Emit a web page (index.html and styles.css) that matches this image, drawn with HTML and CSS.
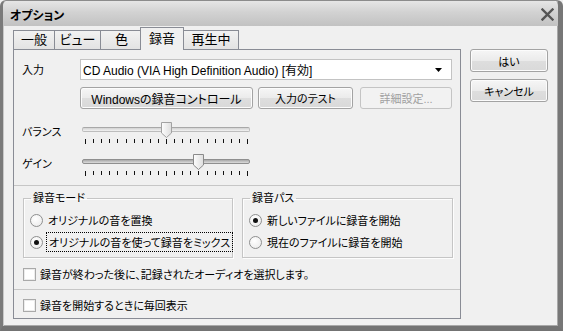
FILE: index.html
```html
<!DOCTYPE html>
<html lang="ja">
<head>
  <meta charset="UTF-8" />
  <meta name="viewport" content="width=device-width, initial-scale=1.0" />
  <title>オプション</title>
  <link rel="stylesheet" href="styles.css">
</head>
<body>
  <div class="window">
    <div class="titlebar">
      <span class="title">オプション</span>
      <svg class="close" width="13" height="13" viewBox="0 0 13 13">
        <path d="M1.5 1.5 L11.5 11.5 M11.5 1.5 L1.5 11.5" stroke="#555" stroke-width="2.4" stroke-linecap="square" />
      </svg>
    </div>

    <div class="client">
      <div class="main">
        <div class="tabs">
          <div class="tab tab-general">一般</div>
          <div class="tab tab-view">ビュー</div>
          <div class="tab tab-color">色</div>
          <div class="tab tab-rec active">録音</div>
          <div class="tab tab-play">再生中</div>
        </div>

        <div class="panel">
          <div class="row-input">
            <label class="field-label">入力</label>
            <div class="combo">
              <span class="combo-text">CD Audio (VIA High Definition Audio) [有効]</span>
              <svg class="combo-arrow" width="7" height="4" viewBox="0 0 7 4"><path d="M0 0h7L3.5 4z" fill="#000" /></svg>
            </div>
          </div>

          <div class="row-buttons">
            <button class="btn btn-wincontrol">Windowsの録音コントロール</button>
            <button class="btn btn-test">入力のテスト</button>
            <button class="btn btn-detail" disabled>詳細設定...</button>
          </div>

          <div class="slider-row">
            <label class="field-label slider-label">バランス</label>
            <div class="slider">
              <div class="track"></div>
              <svg class="thumb" style="left: 50%" width="11" height="16" viewBox="0 0 11 16">
                <defs>
                  <linearGradient id="tg1" x1="0" y1="0" x2="1" y2="0">
                    <stop offset="0" stop-color="#fdfdfd" /><stop offset="1" stop-color="#dedede" />
                  </linearGradient>
                </defs>
                <path d="M0.5 0.5h10v10.5l-5 4.5l-5-4.5z" fill="url(#tg1)" stroke="#a2a2a2" />
              </svg>
              <svg class="ticks" width="164" height="5" viewBox="0 0 164 5" shape-rendering="crispEdges">
                <path d="M0.5 0v5M8.5 0v4M16.5 0v4M24.5 0v4M32.5 0v4M41.5 0v4M49.5 0v4M57.5 0v4M65.5 0v4M73.5 0v4M81.5 0v5M89.5 0v4M97.5 0v4M105.5 0v4M113.5 0v4M122.5 0v4M130.5 0v4M138.5 0v4M146.5 0v4M154.5 0v4M162.5 0v5" stroke="#111" />
              </svg>
            </div>
          </div>

          <div class="slider-row">
            <label class="field-label slider-label">ゲイン</label>
            <div class="slider">
              <div class="track track-focus"></div>
              <svg class="thumb" style="left: 69%" width="11" height="16" viewBox="0 0 11 16">
                <defs>
                  <linearGradient id="tg2" x1="0" y1="0" x2="1" y2="0">
                    <stop offset="0" stop-color="#fdfdfd" /><stop offset="1" stop-color="#dedede" />
                  </linearGradient>
                </defs>
                <path d="M0.5 0.5h10v10.5l-5 4.5l-5-4.5z" fill="url(#tg2)" stroke="#8a8a8a" />
              </svg>
              <svg class="ticks" width="164" height="5" viewBox="0 0 164 5" shape-rendering="crispEdges">
                <path d="M0.5 0v5M8.5 0v4M16.5 0v4M24.5 0v4M32.5 0v4M41.5 0v4M49.5 0v4M57.5 0v4M65.5 0v4M73.5 0v4M81.5 0v5M89.5 0v4M97.5 0v4M105.5 0v4M113.5 0v4M122.5 0v4M130.5 0v4M138.5 0v4M146.5 0v4M154.5 0v4M162.5 0v5" stroke="#111" />
              </svg>
            </div>
          </div>

          <div class="separator sep-top"></div>

          <div class="groups">
            <fieldset class="group group-mode">
              <legend>録音モード</legend>
              <div class="radio-row">
                <span class="radio"></span>
                <span>オリジナルの音を置換</span>
              </div>
              <div class="radio-row">
                <span class="radio checked"></span>
                <span class="focus">オリジナルの音を使って録音をミックス</span>
              </div>
            </fieldset>
            <fieldset class="group group-path">
              <legend>録音パス</legend>
              <div class="radio-row">
                <span class="radio checked"></span>
                <span>新しいファイルに録音を開始</span>
              </div>
              <div class="radio-row">
                <span class="radio"></span>
                <span>現在のファイルに録音を開始</span>
              </div>
            </fieldset>
          </div>

          <div class="check-row check-select">
            <span class="checkbox"></span>
            <span>録音が終わった後に、記録されたオーディオを選択します。</span>
          </div>

          <div class="separator sep-bottom"></div>

          <div class="check-row check-show">
            <span class="checkbox"></span>
            <span>録音を開始するときに毎回表示</span>
          </div>
        </div>
      </div>

      <div class="side">
        <button class="btn btn-side">はい</button>
        <button class="btn btn-side">キャンセル</button>
      </div>
    </div>
  </div>
</body>
</html>
```

FILE: styles.css
```css
* {
  box-sizing: border-box;
}
body {
  margin: 0;
  padding: 0;
  font-family: 'Liberation Sans', 'Noto Sans CJK JP', sans-serif;
  font-size: 11px;
  font-feature-settings: "palt";
  color: #000;
  background: #f0f0f0;
  overflow: hidden;
  white-space: nowrap;
}
.window {
  width: 563px;
  height: 331px;
  border-top: 1px solid #8c8c8c;
  border-left: 3px solid #7a7a7a;
  border-right: 5px solid #777;
  border-bottom: 5px solid #737373;
  border-radius: 6px 6px 0 0;
  box-shadow: inset 1px 0 0 #c8c8c8, inset -1px 0 0 #a8a8a8, inset 0 -1px 0 #a8a8a8;
  background: #f0f0f0;
  display: flex;
  flex-direction: column;
}
.titlebar {
  height: 25px;
  flex: none;
  display: flex;
  align-items: center;
  justify-content: space-between;
  padding: 1px 4px 0 7px;
  background: linear-gradient(#e6e6e6, #d2d2d2 45%, #c2c2c2);
  border-radius: 5px 5px 0 0;
}
.title {
  font-weight: bold;
  font-size: 12px;
}
.close {
  display: block;
  margin-top: 1px;
}
.client {
  flex: 1;
  display: flex;
  gap: 9px;
  padding: 1px 10px 7px 10px;
}
.main {
  width: 448px;
  display: flex;
  flex-direction: column;
}
.tabs {
  height: 22px;
  display: flex;
  align-items: flex-end;
}
.tab {
  height: 19px;
  font-size: 13px;
  line-height: 18px;
  text-align: center;
  border: 1px solid #898c95;
  border-bottom: none;
  background: linear-gradient(#f2f2f2, #e3e3e3);
  margin-right: -1px;
}
.tab-general { width: 42px; }
.tab-view { width: 47px; }
.tab-color { width: 43px; }
.tab-play { width: 56px; }
.tab.active {
  height: 23px;
  margin: 0 -1px -1px -2px;
  width: 44px;
  line-height: 21px;
  background: #f0f0f0;
  position: relative;
  z-index: 1;
}
.panel {
  height: 270px;
  border: 1px solid #898c95;
  background: #f0f0f0;
}
.field-label {
  width: 58px;
  flex: none;
  line-height: 14px;
}
.row-input {
  display: flex;
  align-items: center;
  margin-top: 9px;
  padding-left: 8px;
}
.combo {
  width: 372px;
  height: 21px;
  background: #fff;
  border: 1px solid #c3c3c3;
  display: flex;
  align-items: center;
  justify-content: space-between;
  padding: 0 9px 0 2px;
}
.combo-text {
  font-size: 12px;
}
.combo-arrow {
  display: block;
}
.row-buttons {
  display: flex;
  margin-top: 7px;
  padding-left: 66px;
}
.btn {
  font-family: inherit;
  font-size: 11px;
  font-feature-settings: "palt";
  height: 22px;
  padding: 0;
  color: #000;
  border: 1px solid #a3a3a3;
  border-radius: 3px;
  background: linear-gradient(#f6f6f6, #ebebeb 50%, #dedede 51%, #d9d9d9);
  box-shadow: inset 0 0 0 1px #fcfcfc;
}
.btn-wincontrol {
  width: 173px;
  font-size: 12px;
}
.btn-test { width: 95px; margin-left: 5px; }
.btn-detail {
  width: 92px;
  margin-left: 7px;
  color: #a0a0a0;
  border-color: #c4c4c4;
  background: #f2f2f2;
  box-shadow: none;
}
.slider-row {
  display: flex;
  height: 32px;
  padding-left: 8px;
}
.row-buttons + .slider-row {
  margin-top: 9px;
}
.slider-label {
  padding-top: 7px;
}
.slider {
  position: relative;
  width: 168px;
  margin-left: 2px;
}
.track {
  position: absolute;
  left: 0;
  top: 9px;
  width: 168px;
  height: 5px;
  border: 1px solid #bdbdbd;
  border-top-color: #a8a8a8;
  border-radius: 2px;
  background: linear-gradient(#d2d2d2, #f2f2f2);
}
.track-focus {
  border-color: #8f8f8f;
  background: linear-gradient(#a8a8a8, #dcdcdc);
}
.thumb {
  position: absolute;
  top: 4px;
  margin-left: -5px;
}
.ticks {
  position: absolute;
  left: 3px;
  top: 21px;
}
.separator {
  height: 1px;
  background: #c6c6c6;
}
.sep-top {
  margin-top: 3px;
}
.groups {
  display: flex;
  gap: 9px;
  margin-top: 5px;
  padding-left: 9px;
}
.group {
  margin: 0;
  min-width: 0;
  padding: 4px 0 4px 6px;
  border: 1px solid #c5c5c5;
  box-shadow: inset 1px 1px 0 #fdfdfd, 1px 1px 0 #fdfdfd;
}
.group-mode { width: 210px; }
.group-path { width: 211px; }
.group legend {
  line-height: 14px;
  padding: 0 2px;
  margin-left: 1px;
}
.radio-row {
  display: flex;
  align-items: center;
  gap: 5px;
  height: 22px;
}
.radio {
  width: 13px;
  height: 13px;
  flex: none;
  border-radius: 50%;
  border: 1px solid #8e8f8f;
  background: radial-gradient(circle at 40% 35%, #fff, #e8e8e8);
  position: relative;
}
.radio.checked::after {
  content: "";
  position: absolute;
  left: 3px;
  top: 3px;
  width: 5px;
  height: 5px;
  border-radius: 50%;
  background: #111;
}
.focus {
  outline: 1px dotted #000;
  outline-offset: 1px;
  padding: 0 1px;
}
.check-row {
  display: flex;
  align-items: center;
  gap: 4px;
  height: 22px;
  padding-left: 9px;
}
.check-select {
  margin-top: 5px;
}
.sep-bottom {
  margin-top: 4px;
}
.check-show {
  margin-top: 4px;
}
.checkbox {
  width: 13px;
  height: 13px;
  flex: none;
  background: #fff;
  border: 1px solid #a9a9a9;
  box-shadow: inset 0 0 0 1px #ececec;
}
.side {
  width: 78px;
  padding-top: 22px;
  display: flex;
  flex-direction: column;
  gap: 7px;
}
.btn-side {
  width: 78px;
  height: 23px;
}
```
